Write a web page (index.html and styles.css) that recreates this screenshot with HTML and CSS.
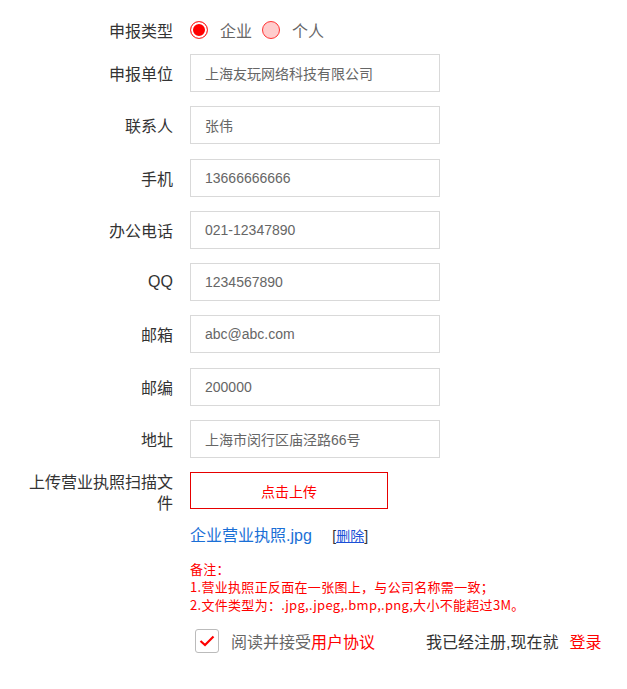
FILE: index.html
```html
<!DOCTYPE html>
<html lang="zh-CN">
<head>
    <meta charset="UTF-8">
    <title>注册</title>
    <link rel="stylesheet" href="styles.css">
</head>
<body>
    <form class="reg-form">
        <div class="row row-radio">
            <label class="row-label">申报类型</label>
            <div class="radios">
                <span class="radio checked"></span><span class="radio-text">企业</span>
                <span class="radio"></span><span class="radio-text">个人</span>
            </div>
        </div>
        <div class="row">
            <label class="row-label">申报单位</label>
            <input class="field" type="text" value="上海友玩网络科技有限公司">
        </div>
        <div class="row">
            <label class="row-label">联系人</label>
            <input class="field" type="text" value="张伟">
        </div>
        <div class="row">
            <label class="row-label">手机</label>
            <input class="field" type="text" value="13666666666">
        </div>
        <div class="row">
            <label class="row-label">办公电话</label>
            <input class="field" type="text" value="021-12347890">
        </div>
        <div class="row">
            <label class="row-label">QQ</label>
            <input class="field" type="text" value="1234567890">
        </div>
        <div class="row">
            <label class="row-label">邮箱</label>
            <input class="field" type="text" value="abc@abc.com">
        </div>
        <div class="row">
            <label class="row-label">邮编</label>
            <input class="field" type="text" value="200000">
        </div>
        <div class="row">
            <label class="row-label">地址</label>
            <input class="field" type="text" value="上海市闵行区庙泾路66号">
        </div>
        <div class="row row-upload">
            <label class="row-label">上传营业执照扫描文件</label>
            <button type="button" class="upload-btn">点击上传</button>
        </div>
        <div class="file-line">
            <a class="file-name" href="#">企业营业执照.jpg</a>
            <span class="file-del">[<a href="#">删除</a>]</span>
        </div>
        <div class="notes">
            <p>备注：</p>
            <p>1.营业执照正反面在一张图上，与公司名称需一致；</p>
            <p>2.文件类型为：.jpg,.jpeg,.bmp,.png,大小不能超过3M。</p>
        </div>
        <div class="agree-line">
            <span class="checkbox">
                <svg width="16" height="12" viewBox="0 0 16 12"><path d="M1.5 6 L6 10 L14.5 1.5" fill="none" stroke="#f00" stroke-width="2.2"/></svg>
            </span>
            <span class="agree-text">阅读并接受<a href="#" class="red">用户协议</a></span>
            <span class="login-text">我已经注册,现在就<a href="#" class="red login-link">登录</a></span>
        </div>
    </form>
</body>
</html>
```

FILE: styles.css
```css
body {
    margin: 0;
    font-family: "Liberation Sans", Arial, "Noto Sans CJK SC", sans-serif;
    color: #333;
    background: #fff;
}

.reg-form {
    padding: 11px 0 0 23px;
}

/* form rows */
.row {
    display: flex;
    align-items: center;
    height: 38px;
    margin-bottom: 14.3px;
}

.row-radio {
    margin-bottom: 5px;
}

.row-label {
    width: 150px;
    flex-shrink: 0;
    margin-right: 17px;
    text-align: right;
    font-size: 16px;
    color: #333;
}

.field {
    box-sizing: border-box;
    width: 250px;
    height: 38px;
    border: 1px solid #d9d9d9;
    padding: 0 14px;
    font-family: inherit;
    font-size: 14px;
    color: #666;
    outline: none;
}

/* radios */
.radios {
    display: flex;
    align-items: center;
}

.radio {
    box-sizing: border-box;
    width: 18px;
    height: 18px;
    border: 1px solid #f33;
    border-radius: 50%;
    background: #fcc;
}

.radio.checked {
    background: #f00;
    box-shadow: inset 0 0 0 2px #fff;
}

.radio-text {
    font-size: 16px;
    color: #666;
    margin: 0 10px 0 12px;
}

/* upload */
.row-upload {
    align-items: flex-start;
    height: 37px;
    margin-bottom: 12px;
}

.row-upload .row-label {
    line-height: 21px;
}

.upload-btn {
    box-sizing: border-box;
    width: 198px;
    height: 37px;
    border: 1px solid #e60000;
    background: #fff;
    color: #f00;
    font-family: inherit;
    font-size: 14px;
    cursor: pointer;
}

.file-line {
    margin-left: 167px;
    height: 30px;
    line-height: 30px;
}

.file-name {
    font-size: 16px;
    color: #1a6fd6;
    text-decoration: none;
}

.file-del {
    margin-left: 16px;
    font-size: 14px;
    color: #333;
}

.file-del a {
    color: #1a4fd6;
}

.notes {
    margin: 9px 0 0 167px;
    font-family: "Noto Sans CJK SC", sans-serif;
    font-size: 13px;
    line-height: 18px;
    letter-spacing: 0.3px;
    color: #f00;
}

.notes p {
    margin: 0;
}

/* agreement */
.agree-line {
    display: flex;
    align-items: center;
    margin: 14px 0 0 172px;
    height: 26px;
    font-size: 16px;
}

.checkbox {
    box-sizing: border-box;
    width: 24px;
    height: 24px;
    border: 1px solid #bbb;
    border-radius: 3px;
    display: flex;
    align-items: center;
    justify-content: center;
}

.agree-text {
    margin-left: 12px;
    color: #666;
}

.login-text {
    margin-left: 51px;
    color: #333;
}

.red {
    color: #f00;
    text-decoration: none;
}

.login-link {
    margin-left: 11px;
}
```
